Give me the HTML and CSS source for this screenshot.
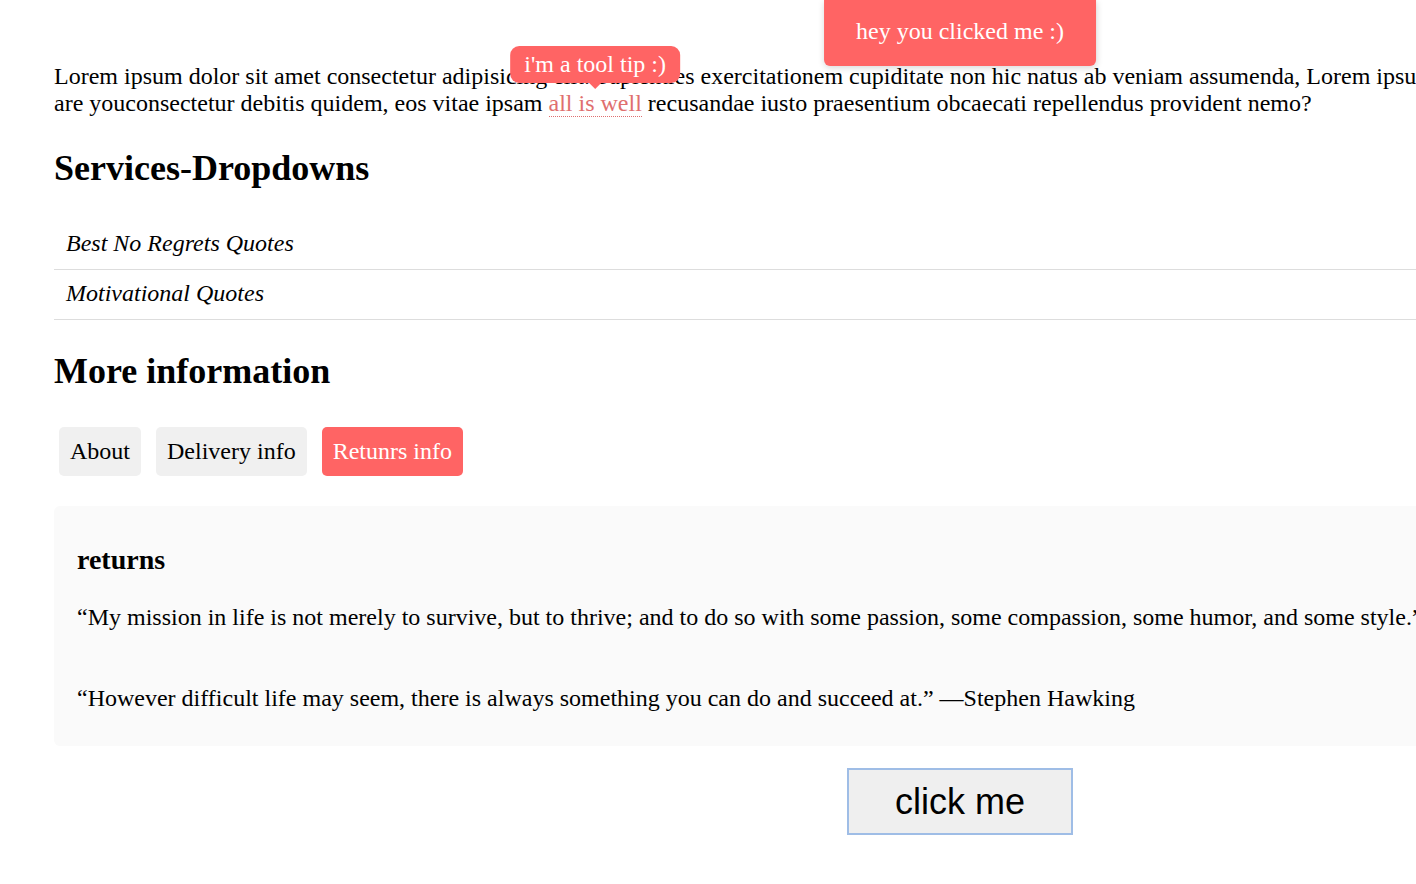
FILE: index.html
```html
<!DOCTYPE html>
<html lang="en">
<head>
<meta charset="utf-8">
<title>Services</title>
<link rel="stylesheet" href="styles.css">
</head>
<body>
<main class="page">
  <div class="toast">hey you clicked me :)</div>

  <p class="intro">Lorem ipsum dolor sit amet consectetur adipisicing elit. Sapienties exercitationem cupiditate non hic natus ab veniam assumenda, Lorem ipsum dolor sit amet, how<br>are youconsectetur debitis quidem, eos vitae ipsam <span class="tip-anchor">all is well<span class="tooltip">i'm a tool tip :)</span></span> recusandae iusto praesentium obcaecati repellendus provident nemo?</p>

  <h2 class="section-title">Services-Dropdowns</h2>
  <ul class="dropdowns">
    <li class="dropdown-item">Best No Regrets Quotes</li>
    <li class="dropdown-item">Motivational Quotes</li>
  </ul>

  <h2 class="section-title">More information</h2>
  <div class="tabs">
    <button class="tab">About</button>
    <button class="tab">Delivery info</button>
    <button class="tab tab-active">Retunrs info</button>
  </div>

  <section class="panel">
    <h3 class="panel-title">returns</h3>
    <p class="quote">“My mission in life is not merely to survive, but to thrive; and to do so with some passion, some compassion, some humor, and some style.” —Maya Angelou</p>
    <p class="quote quote-next">“However difficult life may seem, there is always something you can do and succeed at.” —Stephen Hawking</p>
  </section>

  <div class="actions">
    <button class="click-btn">click me</button>
  </div>
</main>
</body>
</html>
```

FILE: styles.css
```css
html, body {
  overflow-x: hidden;
}

body {
  margin: 0;
  background: #ffffff;
  color: #000000;
  font-family: "Liberation Serif", "Times New Roman", serif;
  font-size: 24px;
}

.page {
  position: relative;
  width: 1920px;
  box-sizing: border-box;
  padding: 39px 54px 40px;
}

.toast {
  position: absolute;
  top: 0;
  left: 50%;
  transform: translateX(-50%);
  padding: 17px 32px 21px;
  line-height: 28px;
  background: #ff6464;
  color: #fff;
  border-radius: 0 0 6px 6px;
  box-shadow: 0 2px 6px rgba(0, 0, 0, 0.15);
  white-space: nowrap;
}

.intro {
  margin: 24px 0;
}

.tip-anchor {
  position: relative;
  display: inline-block;
  line-height: 26px;
  color: #df6f6f;
  border-bottom: 1px dotted #df6f6f;
}

.tooltip {
  position: absolute;
  left: 50%;
  bottom: 100%;
  margin-bottom: 7px;
  transform: translateX(-50%);
  padding: 5px 14px;
  line-height: 27px;
  background: #ff6464;
  color: #fff;
  border-radius: 9px;
  white-space: nowrap;
}

.tooltip::after {
  content: "";
  position: absolute;
  left: 50%;
  top: 100%;
  margin-left: -6px;
  border-width: 6px 6px 0;
  border-style: solid;
  border-color: #ff6464 transparent transparent;
}

.section-title {
  font-size: 36px;
  font-weight: bold;
  margin: 30px 0;
}

.dropdowns {
  list-style: none;
  margin: 0;
  padding: 1px 0 0;
}

.dropdown-item {
  font-style: italic;
  line-height: 28px;
  padding: 9px 12px 12px;
  border-bottom: 1px solid #dddddd;
}

.tabs {
  display: flex;
  gap: 5px;
}

.tab {
  margin: 5px;
  padding: 11px;
  border: 0;
  border-radius: 5px;
  background: #f0f0f0;
  color: #000;
  font-family: "Liberation Serif", "Times New Roman", serif;
  font-size: 24px;
  line-height: 27px;
}

.tab-active {
  background: #ff6464;
  color: #fff;
}

.panel {
  margin-top: 25px;
  padding: 10px 23px;
  background: #fafafa;
  border-radius: 6px;
}

.panel-title {
  font-size: 28px;
  font-weight: bold;
  margin: 28px 0;
}

.quote {
  margin: 24px 0;
}

.quote-next {
  margin-top: 54px;
}

.actions {
  display: flex;
  justify-content: center;
  margin-top: 22px;
}

.click-btn {
  padding: 10px 46px;
  border: 2px solid #9fbde6;
  border-radius: 0;
  background: #efefef;
  color: #000;
  font-family: "Liberation Sans", Arial, sans-serif;
  font-size: 36px;
  line-height: 43px;
}
```
